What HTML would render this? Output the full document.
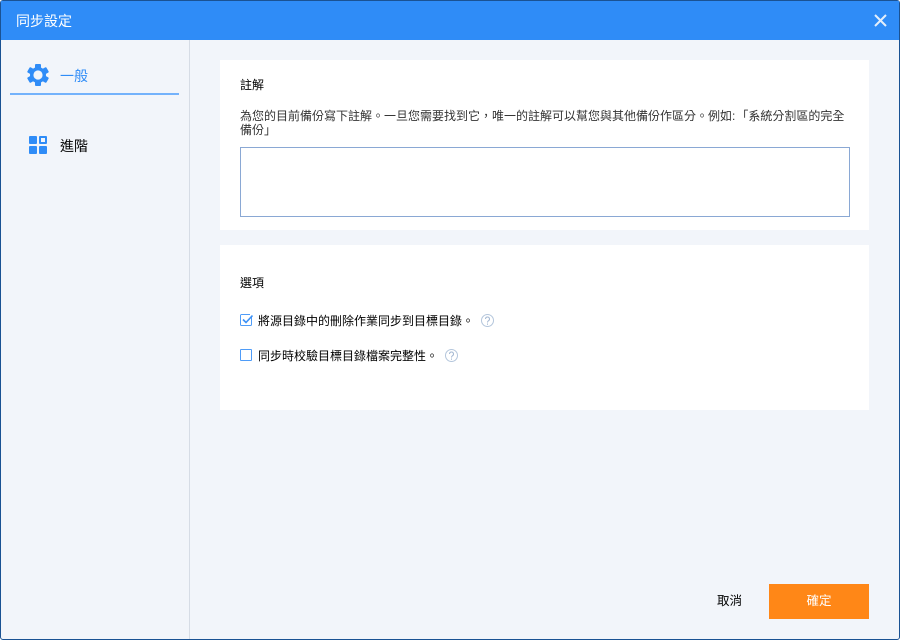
<!DOCTYPE html>
<html lang="zh-Hant">
<head>
<meta charset="utf-8">
<title>同步設定</title>
<style>
html,body{margin:0;padding:0;width:900px;height:640px;overflow:hidden;background:#fff}
*{box-sizing:border-box}
body{font-family:"Liberation Sans","WenQuanYi Zen Hei","Noto Sans CJK TC",sans-serif;position:relative}
.a{position:absolute;white-space:nowrap}
#win{position:absolute;left:0;top:0;width:900px;height:640px;background:#f2f5fa;border:1px solid #1a5293;border-radius:3px;overflow:hidden}
#head{left:0;top:0;width:900px;height:40px;background:#2f8cf7}
.t{font-size:12px;line-height:14px;color:#333}
.k{color:#000}
</style>
</head>
<body>
<div id="win"></div>
<div class="a" id="head" style="left:1px;top:1px;width:898px;height:39px"></div>
<div class="a" style="left:16px;top:13px;font-size:14px;line-height:16px;color:#fff">同步設定</div>
<svg class="a" style="left:873px;top:13px" width="15" height="15" viewBox="0 0 15 15"><path d="M2 2L13 13M13 2L2 13" stroke="#e4eefb" stroke-width="2" fill="none"/></svg>

<div class="a" style="left:189px;top:40px;width:1px;height:599px;background:#d6dce5"></div>

<svg class="a" style="left:27px;top:64px" width="22" height="22" viewBox="0 0 22 22">
<g fill="#2f8cf7"><circle cx="11" cy="11" r="8"/>
<rect x="8" y="0" width="6" height="22" rx="1"/>
<rect x="8" y="0" width="6" height="22" rx="1" transform="rotate(60 11 11)"/>
<rect x="8" y="0" width="6" height="22" rx="1" transform="rotate(120 11 11)"/></g>
<circle cx="11" cy="11" r="4.6" fill="#f2f5fa"/>
</svg>
<div class="a" style="left:60px;top:68px;font-size:14px;line-height:16px;color:#2f8cf7">一般</div>
<div class="a" style="left:10px;top:93px;width:169px;height:2px;background:#74b2fb"></div>

<svg class="a" style="left:29px;top:136px" width="18" height="18" viewBox="0 0 18 18">
<rect x="0" y="0" width="8" height="8" rx="1" fill="#2f8cf7"/>
<rect x="10" y="0" width="8" height="8" rx="1" fill="#2f8cf7"/>
<rect x="12" y="2" width="4" height="4" fill="#f2f5fa"/>
<rect x="0" y="10" width="8" height="8" rx="1" fill="#2f8cf7"/>
<rect x="10" y="10" width="8" height="8" rx="1" fill="#2f8cf7"/>
</svg>
<div class="a k" style="left:60px;top:138px;font-size:14px;line-height:16px">進階</div>

<div class="a" style="left:220px;top:60px;width:649px;height:170px;background:#fff"></div>
<div class="a t k" style="left:240px;top:78px">註解</div>
<div class="a t" style="left:240px;top:109px">為您的目前備份寫下註解。一旦您需要找到它&#65292;唯一的註解可以幫您與其他備份作區分。例如<span style="letter-spacing:1px">:</span>「系統分割區的完全<br>備份」</div>
<div class="a" style="left:240px;top:147px;width:610px;height:70px;background:#fff;border:1px solid #8aa8d4"></div>

<div class="a" style="left:220px;top:245px;width:649px;height:165px;background:#fff"></div>
<div class="a t k" style="left:240px;top:276px">選項</div>

<svg class="a" style="left:240px;top:314px" width="13" height="13" viewBox="0 0 13 13">
<path d="M11.500 3V10.500a1 1 0 0 1-1 1H1.500a1 1 0 0 1-1-1V1.500a1 1 0 0 1 1-1H10" fill="none" stroke="#4f9cf8" stroke-width="1"/>
<path d="M3 5.500L6 8.500L12.500 1.500" fill="none" stroke="#3a90f6" stroke-width="1.600"/>
</svg>
<div class="a t k" style="left:258px;top:314px">將源目錄中的刪除作業同步到目標目錄。</div>
<svg class="a" style="left:481px;top:314px" width="13" height="13" viewBox="0 0 13 13">
<circle cx="6.500" cy="6.500" r="6" fill="none" stroke="#b4c6dc"/>
<path d="M4.500 5a2 2 0 1 1 3 1.700C6.800 7.200 6.500 7.500 6.500 8.500M6.500 9.500V10.700" fill="none" stroke="#a4b8d2"/>
</svg>

<div class="a" style="left:240px;top:349px;width:12px;height:12px;background:#fff;border:1px solid #4f9cf8;border-radius:1px"></div>
<div class="a t k" style="left:258px;top:349px">同步時校驗目標目錄檔案完整性。</div>
<svg class="a" style="left:445px;top:349px" width="13" height="13" viewBox="0 0 13 13">
<circle cx="6.500" cy="6.500" r="6" fill="none" stroke="#b4c6dc"/>
<path d="M4.500 5a2 2 0 1 1 3 1.700C6.800 7.200 6.500 7.500 6.500 8.500M6.500 9.500V10.700" fill="none" stroke="#a4b8d2"/>
</svg>

<div class="a k" style="left:717px;top:594px;font-size:12.500px;line-height:15px">取消</div>
<div class="a" style="left:769px;top:584px;width:100px;height:35px;background:#ff8717"></div>
<div class="a" style="left:769px;top:594px;width:100px;text-align:center;font-size:12.500px;line-height:15px;color:#fff">確定</div>
</body>
</html>
